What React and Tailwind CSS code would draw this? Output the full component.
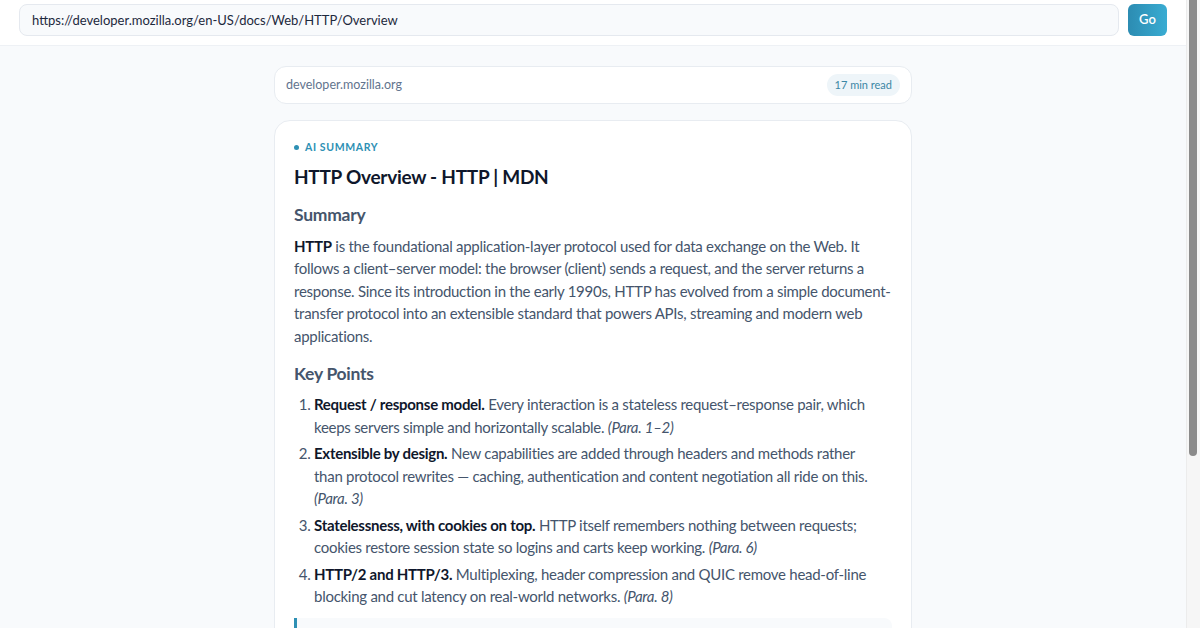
const points = [
  {
    title: "Request / response model.",
    text: " Every interaction is a stateless request–response pair, which keeps servers simple and horizontally scalable. ",
    ref: "(Para. 1–2)",
  },
  {
    title: "Extensible by design.",
    text: " New capabilities are added through headers and methods rather than protocol rewrites — caching, authentication and content negotiation all ride on this. ",
    ref: "(Para. 3)",
  },
  {
    title: "Statelessness, with cookies on top.",
    text: " HTTP itself remembers nothing between requests; cookies restore session state so logins and carts keep working. ",
    ref: "(Para. 6)",
  },
  {
    title: "HTTP/2 and HTTP/3.",
    text: " Multiplexing, header compression and QUIC remove head-of-line blocking and cut latency on real-world networks. ",
    ref: "(Para. 8)",
  },
];

export default function App() {
  return (
    <div className="flex h-[628px] overflow-hidden bg-[#f8fafc] font-['Lato','Liberation_Sans',sans-serif]">
      <div className="flex-1 min-w-0">
        {/* URL BAR */}
        <header className="flex items-center gap-[9px] h-[46px] px-[19px] pb-[6px] bg-white border-b border-[#eef1f5]">
          <input
            readOnly
            value="https://developer.mozilla.org/en-US/docs/Web/HTTP/Overview"
            className="flex-1 h-[32px] rounded-lg border border-[#e5e9ef] bg-[#f8fafc] px-[12px] text-[13px] text-slate-800 outline-none"
          />
          <button className="w-[39px] h-[32px] rounded-md bg-gradient-to-r from-[#2c8cb2] to-[#39acd2] text-white text-[13px] font-semibold">
            Go
          </button>
        </header>

        <main className="w-[638px] mx-auto pt-[20px]">
          {/* SOURCE */}
          <div className="flex items-center justify-between h-[38px] px-[11px] rounded-xl border border-[#e8ecf1] bg-white">
            <span className="text-[12.5px] text-slate-500">developer.mozilla.org</span>
            <span className="rounded-full bg-[#eef5f9] px-[8px] py-[3px] text-[11px] text-[#3c87a5]">
              17 min read
            </span>
          </div>

          {/* SUMMARY CARD */}
          <article className="mt-[16px] rounded-2xl border border-[#e8ecf1] bg-white px-[19px] pt-[19px] pb-6 tracking-[-0.017em]">
            <div className="flex items-center gap-[6px] text-[10.5px] font-bold tracking-[0.06em] text-[#2e90b4]">
              <span className="w-[5px] h-[5px] rounded-full bg-[#2e90b4]" />
              AI SUMMARY
            </div>
            <h1 className="mt-[7px] text-[19px] leading-[28px] font-bold text-slate-900">
              HTTP Overview - HTTP | MDN
            </h1>

            <h2 className="mt-[11px] text-[17.5px] leading-[26px] font-bold text-slate-600">Summary</h2>
            <p className="mt-[7px] text-[15px] leading-[22.5px] text-slate-600">
              <strong className="text-slate-900">HTTP</strong> is the foundational application-layer protocol used
              for data exchange on the Web. It follows a client–server model: the browser (client) sends a request, and
              the server returns a response. Since its introduction in the early 1990s, HTTP has evolved from a simple
              document-transfer protocol into an extensible standard that powers APIs, streaming and modern web
              applications.
            </p>

            <h2 className="mt-[14px] text-[17.5px] leading-[26px] font-bold text-slate-600">Key Points</h2>
            <ol className="mt-[6px] list-decimal pl-[20px] pr-[8px] flex flex-col gap-[4px] text-[15px] leading-[22.5px] text-slate-600 marker:text-slate-600">
              {points.map((p) => (
                <li key={p.title}>
                  <strong className="text-slate-900">{p.title}</strong>
                  {p.text}
                  <em className="whitespace-nowrap">{p.ref}</em>
                </li>
              ))}
            </ol>

            {/* QUOTE */}
            <div className="mt-[10px] h-[40px] rounded-r-lg border-l-[3px] border-[#2e90b4] bg-[#f8fafc]" />
          </article>
        </main>
      </div>

      {/* SCROLLBAR */}
      <div className="w-[14px] shrink-0 bg-[#f6f6f6] border-l border-[#ececec] pl-[2px] pr-[3px]">
        <div className="h-[456px] rounded-b-full bg-[#8b8b8b]" />
      </div>
    </div>
  );
}
